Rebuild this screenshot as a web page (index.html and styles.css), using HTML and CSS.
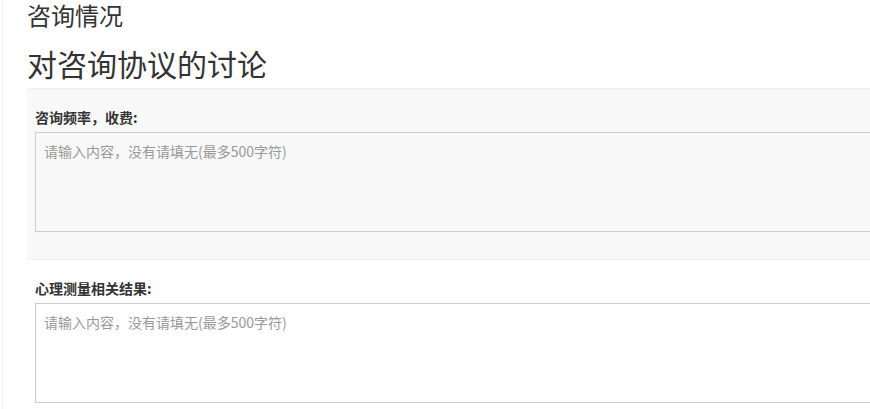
FILE: index.html
```html
<!DOCTYPE html>
<html lang="zh-CN">
<head>
  <meta charset="UTF-8">
  <title>咨询情况</title>
  <link rel="stylesheet" href="styles.css">
</head>
<body>
  <div class="page">
    <h2 class="section-title">咨询情况</h2>
    <h1 class="page-title">对咨询协议的讨论</h1>
    <div class="form-group shaded">
      <label for="freq">咨询频率，收费:</label>
      <textarea id="freq" placeholder="请输入内容，没有请填无(最多500字符)"></textarea>
    </div>
    <div class="form-group">
      <label for="result">心理测量相关结果:</label>
      <textarea id="result" placeholder="请输入内容，没有请填无(最多500字符)"></textarea>
    </div>
  </div>
</body>
</html>
```

FILE: styles.css
```css
body { margin: 0; font-family: "Noto Sans CJK SC", "Noto Sans", sans-serif; color: #333; overflow: hidden; }
.page { margin-left: 2px; border-left: 1px solid #f3f3f3; padding-left: 24px; min-height: 409px; }
.section-title { margin: 0; font-size: 24px; font-weight: normal; line-height: 30px; }
.page-title { margin: 13px 0 0; font-size: 30px; font-weight: normal; line-height: 40px; }
.form-group { width: 900px; padding: 18px 8px 27px; margin-top: 5px; }
.form-group + .form-group { margin-top: 0; }
.shaded { background: #f8f8f8; border-top: 1px solid #efefef; border-bottom: 1px solid #efefef; }
.form-group label { display: block; font-size: 14px; font-weight: bold; line-height: 20px; margin-bottom: 5px; color: #333; }
.form-group textarea { display: block; box-sizing: border-box; width: 900px; height: 100px; border: 1px solid #ccc; background: transparent; padding: 8px 8px; font-family: inherit; font-size: 14px; line-height: 20px; resize: none; }
.form-group textarea::placeholder { color: #999; }
```
